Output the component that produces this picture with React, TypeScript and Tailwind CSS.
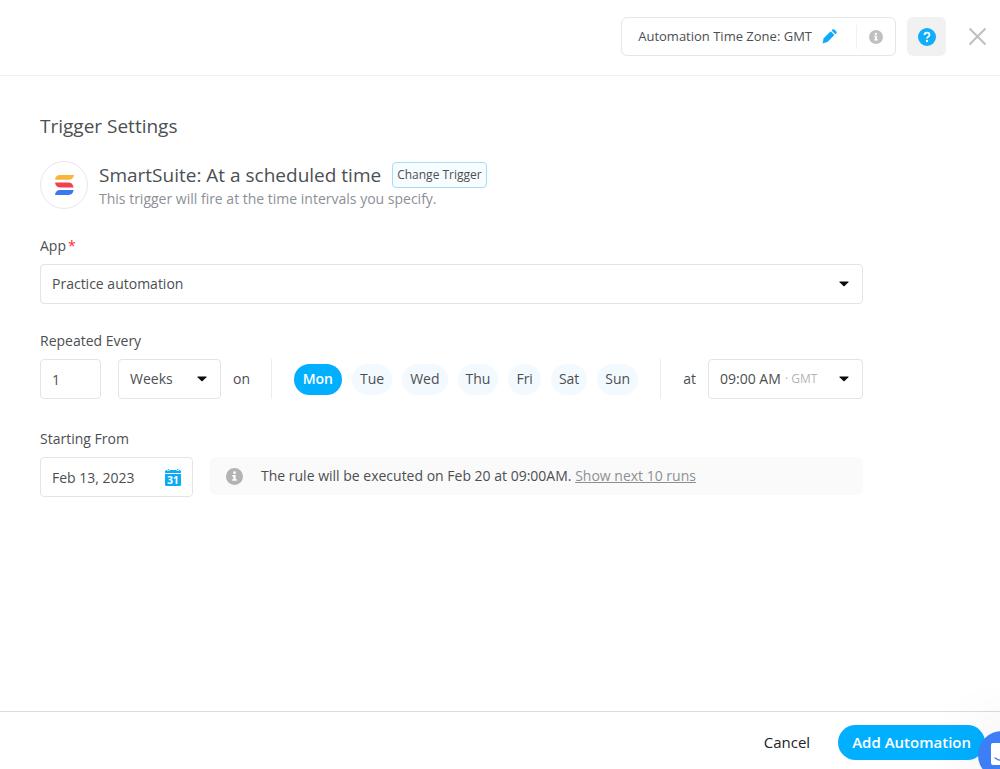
import { useState } from 'react';
import type { ReactNode } from 'react';

const DAYS = ['Mon', 'Tue', 'Wed', 'Thu', 'Fri', 'Sat', 'Sun'];

function Caret() {
  return (
    <svg width="10" height="6" viewBox="0 0 10 6" className="pointer-events-none shrink-0" aria-hidden="true">
      <path d="M0.8 0.5h8.4q.7.1.2.8L5.6 5.1q-.6.5-1.2 0L.6 1.3Q.1.6.8.5z" fill="#0b0b0b" />
    </svg>
  );
}

function InfoIcon({ className }: { className: string }) {
  return (
    <svg viewBox="0 0 18 18" className={className} aria-hidden="true">
      <circle cx="9" cy="9" r="9" fill="currentColor" />
      <circle cx="9" cy="4.9" r="1.5" fill="#fff" />
      <path d="M6.8 7.5h3.4v4.4h1.2v1.7H6.6v-1.7h1.2V9.2h-1z" fill="#fff" />
    </svg>
  );
}

function Logo() {
  return (
    <svg width="20" height="20" viewBox="0 0 20 20" aria-hidden="true">
      <path d="M6 0h14c-.6 3.200-2.300 4.800-5 4.800H1C1.400 2 3 0 6 0z" fill="#fbb43a" />
      <path d="M1 7.400h13.200c3.200 0 5 1.900 5.400 5H6.400c-3 0-5-1.600-5.400-5z" fill="#f1414f" />
      <path d="M6 15h13.600c-.4 3.200-2.100 4.900-5 4.900H1c.5-3.100 2.100-4.900 5-4.900z" fill="#3a77f2" />
    </svg>
  );
}

function Field({ label, htmlFor, required, children }: { label: string; htmlFor: string; required?: boolean; children: ReactNode }) {
  return (
    <div>
      <label htmlFor={htmlFor} className="block text-sm leading-5 text-[#4c4f52]">
        {label}
        {required && <span className="ml-0.5 text-red-500">*</span>}
      </label>
      {children}
    </div>
  );
}

export default function App() {
  const [day, setDay] = useState('Mon');
  const [count, setCount] = useState('1');
  const [date, setDate] = useState('Feb 13, 2023');

  return (
    <div className="flex min-h-screen flex-col bg-white font-['Open_Sans','Noto_Sans',sans-serif] text-sm text-[#4c4f52]">
      <header className="flex h-[76px] items-center justify-end border-b border-[#f1f1f1] pr-3 pb-0.5">
        <div className="flex h-[39px] items-center rounded-md border border-[#e6e6e6] pl-4 text-[13px]">
          <span>Automation Time Zone: GMT</span>
          <button aria-label="Edit time zone" className="ml-2.5 text-[#0cabf7]">
            <svg width="15" height="15" viewBox="0 0 15 15" fill="currentColor">
              <path d="M1.700 9.300 8.700 2.300l3.700 3.700-7 7L.600 14.400z" />
              <path d="m9.600 1.500.900-.900q.9-.8 1.800 0l2 2q.8.900 0 1.800l-1 .900z" />
            </svg>
          </button>
          <span className="ml-[19px] h-6 w-px bg-[#f1f1f1]" />
          <button aria-label="Time zone info" className="px-3 text-[#c1c1c1]">
            <InfoIcon className="size-3.5" />
          </button>
        </div>
        <button aria-label="Help" className="ml-[11px] flex size-[39px] items-center justify-center rounded-md bg-[#f1f1f1]">
          <svg width="18" height="18" viewBox="0 0 18 18">
            <circle cx="9" cy="9" r="9" fill="#10aef8" />
            <path d="M6.500 7q.1-2.400 2.500-2.400t2.500 2.100q0 1.200-1.300 2Q9 9.400 9 10.600" fill="none" stroke="#fff" strokeWidth="1.800" />
            <circle cx="9" cy="13" r="1.200" fill="#fff" />
          </svg>
        </button>
        <button aria-label="Close" className="ml-[21px] text-[#bfbfbf]">
          <svg width="21" height="21" viewBox="0 0 21 21" fill="none" stroke="currentColor" strokeWidth="2">
            <path d="m2.500 2.500 16 16m0-16-16 16" />
          </svg>
        </button>
      </header>

      <main className="flex-1 px-10 pt-9">
        <div className="max-w-[823px]">
          <h1 className="text-[19px] leading-7">Trigger Settings</h1>

          <div className="mt-[21px] flex items-center gap-[11px]">
            <div className="flex size-12 shrink-0 items-center justify-center rounded-full border border-[#e8e8ec]">
              <Logo />
            </div>
            <div>
              <div className="flex items-center gap-[11px]">
                <h2 className="text-[19px] leading-7">SmartSuite: At a scheduled time</h2>
                <button className="h-[26px] rounded border border-[#a6dcf7] bg-[#f7fcff] px-1 text-xs">Change Trigger</button>
              </div>
              <p className="leading-5 text-[#8c9096]">This trigger will fire at the time intervals you specify.</p>
            </div>
          </div>

          <div className="mt-[27px]">
            <Field label="App" htmlFor="app" required>
              <div className="mt-2 flex h-10 items-center rounded border border-[#e4e4e4] pr-[13px]">
                <select id="app" className="h-full flex-1 appearance-none bg-transparent pl-[11px] outline-none">
                  <option>Practice automation</option>
                </select>
                <Caret />
              </div>
            </Field>
          </div>

          <div className="mt-[27px]">
            <Field label="Repeated Every" htmlFor="count">
              <div className="mt-2 flex items-center">
                <input
                  id="count"
                  value={count}
                  onChange={e => setCount(e.target.value)}
                  className="h-10 w-[61px] rounded border border-[#e4e4e4] px-[11px] outline-none"
                />
                <div className="ml-[17px] flex h-10 w-[103px] items-center rounded border border-[#e4e4e4] pr-[13px]">
                  <select aria-label="Unit" className="h-full flex-1 appearance-none bg-transparent pl-[11px] outline-none">
                    <option>Weeks</option>
                    <option>Days</option>
                  </select>
                  <Caret />
                </div>
                <span className="ml-3">on</span>
                <span className="ml-auto h-10 w-px bg-[#ececec]" />
                <div className="mx-[22px] flex gap-2.5">
                  {DAYS.map(d => (
                    <button
                      key={d}
                      onClick={() => setDay(d)}
                      aria-pressed={day === d}
                      className={
                        day === d
                          ? 'h-[31px] rounded-full bg-[#00b0ff] px-[9px] font-semibold text-white'
                          : 'h-[31px] rounded-full bg-[#f3faff] px-2'
                      }
                    >
                      {d}
                    </button>
                  ))}
                </div>
                <span className="h-10 w-px bg-[#ececec]" />
                <span className="ml-[22px]">at</span>
                <div className="ml-3 flex h-10 w-[155px] items-center rounded border border-[#e4e4e4] pr-[13px]">
                  <select aria-label="Time" className="h-full appearance-none bg-transparent pl-[11px] outline-none">
                    <option>09:00 AM</option>
                  </select>
                  <span className="ml-1 flex-1 text-xs text-[#b5b5b5]">· GMT</span>
                  <Caret />
                </div>
              </div>
            </Field>
          </div>

          <div className="mt-[30px]">
            <Field label="Starting From" htmlFor="date">
              <div className="mt-2 flex items-start">
                <div className="flex h-10 w-[153px] items-center rounded border border-[#e4e4e4] pr-[11px]">
                  <input
                    id="date"
                    value={date}
                    onChange={e => setDate(e.target.value)}
                    className="h-full min-w-0 flex-1 pl-[11px] outline-none"
                  />
                  <button aria-label="Open calendar">
                    <svg width="16" height="17" viewBox="0 0 16 17">
                      <path d="M0 5h16v10.500q0 1.500-1.500 1.500h-13Q0 17 0 15.500zM0 4V2.500Q0 1 1.500 1H2v1h2.500V1h7v1H14V1h.5Q16 1 16 2.500V4z" fill="#0cabf7" />
                      <path d="M2.700 0h1.200v1.500H2.700zM12.200 0h1.200v1.500h-1.200z" fill="#0cabf7" />
                      <text x="8" y="14.500" textAnchor="middle" fontSize="10" fontWeight="700" fill="#fff">31</text>
                    </svg>
                  </button>
                </div>
                <div className="ml-[17px] flex h-[38px] flex-1 items-center rounded-md bg-[#fafafa] pl-4">
                  <InfoIcon className="size-[17px] text-[#b3b3b3]" />
                  <p className="ml-[18px]">
                    The rule will be executed on Feb 20 at 09:00AM.{' '}
                    <a href="#runs" className="text-[#8c9096] underline">Show next 10 runs</a>
                  </p>
                </div>
              </div>
            </Field>
          </div>
        </div>
      </main>

      <footer className="flex h-[58px] items-center justify-end border-t border-[#dcdcdc] pr-[15px] pt-1">
        <button className="text-[15px] text-[#222]">Cancel</button>
        <button className="ml-7 h-[35px] rounded-full bg-[#00b0ff] px-3.5 text-[15px] font-semibold text-white">Add Automation</button>
      </footer>

      <button
        aria-label="Open chat"
        className="fixed -right-[26px] -bottom-[10px] flex size-12 items-center justify-center rounded-full bg-[#3d7df5] shadow-[0_0_60px_8px_rgba(0,0,0,0.07)]"
      >
        <svg width="24" height="26" viewBox="0 0 24 26">
          <path d="M3 1h18q2 0 2 2v22l-5-2H3q-2 0-2-2V3q0-2 2-2z" fill="#fff" />
          <path d="M5 16q7 5 14 0" fill="none" stroke="#3d7df5" strokeWidth="1.500" strokeLinecap="round" />
        </svg>
      </button>
    </div>
  );
}
